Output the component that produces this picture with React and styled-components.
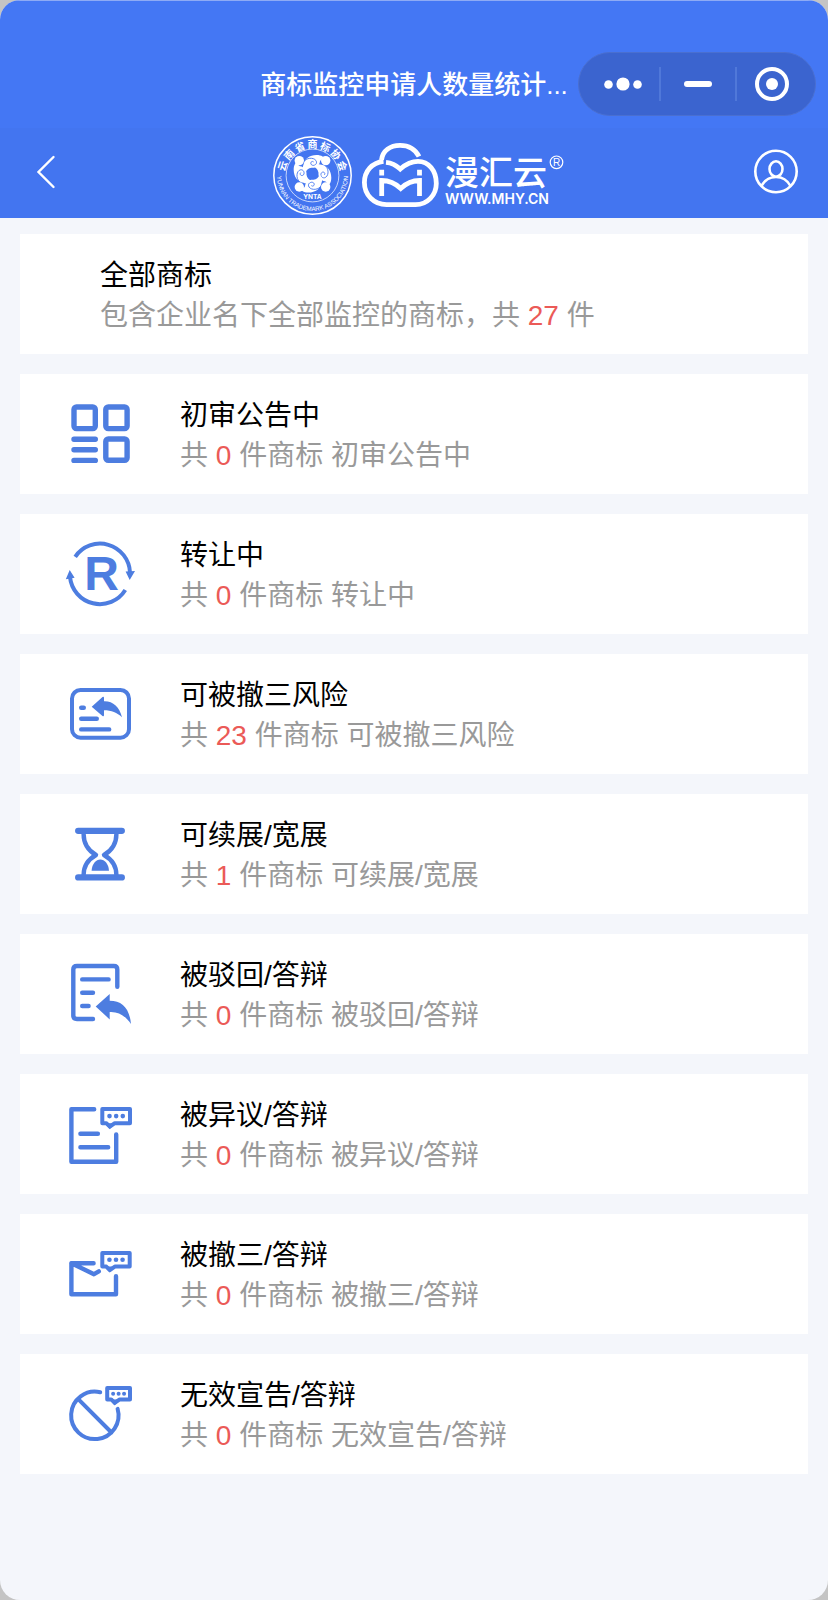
import React from 'react';
import styled, { createGlobalStyle } from 'styled-components';

const GlobalStyle = createGlobalStyle`
  * { box-sizing: border-box; }
  body {
    margin: 0;
    background: #c4c4c4;
    font-family: "Liberation Sans", "Noto Sans CJK SC", sans-serif;
  }
  button { border: 0; padding: 0; background: none; color: inherit; font: inherit; cursor: pointer; }
`;

const Window = styled.div`
  min-height: 100vh;
  background: #f4f6fb;
  border-radius: 20px;
  overflow: hidden;
`;

const TitleBar = styled.div`
  display: grid;
  grid-template-columns: 1fr auto 1fr;
  align-items: center;
  height: 128px;
  padding: 40px 12px 0;
  background: #4477f4;
  box-shadow: inset 0 1px 0 #8eabf5;
  color: #fff;
`;

const PageTitle = styled.h1`
  grid-column: 2;
  margin: 0;
  padding-top: 2px;
  font-size: 26px;
  line-height: 40px;
  font-weight: 500;
  white-space: nowrap;
`;

const Capsule = styled.div`
  justify-self: end;
  display: flex;
  align-items: center;
  width: 238px;
  height: 64px;
  padding: 0 8px;
  border: 1px solid #4a6fd0;
  border-radius: 32px;
  background: #3b64cf;
`;

const CapsuleButton = styled.button`
  flex: 1 1 ${(p) => p.$basis};
  display: flex;
  align-items: center;
  justify-content: center;
  height: 34px;
  & + & { border-left: 2px solid #5078d9; }
`;

const BrandBar = styled.div`
  display: grid;
  grid-template-columns: 1fr auto 1fr;
  align-items: center;
  height: 90px;
  padding: 0 28px;
  background: #4375f0;
  color: #fff;
`;

const IconButton = styled.button`
  justify-self: ${(p) => p.$side};
  display: flex;
`;

const CardList = styled.ul`
  display: flex;
  flex-direction: column;
  gap: 20px;
  margin: 0;
  padding: 16px 20px;
  list-style: none;
`;

const Card = styled.li`
  display: flex;
  align-items: center;
  gap: 40px;
  min-height: 120px;
  padding: 18px 40px 18px ${(p) => (p.$plain ? '80px' : '40px')};
  background: #fff;
`;

const CardIcon = styled.svg`
  flex: none;
  width: 80px;
  height: 80px;
  fill: none;
  stroke: #4d7de0;
  stroke-width: 4.4;
  stroke-linecap: round;
  stroke-linejoin: round;
  .solid { fill: #4d7de0; stroke: none; }
`;

const CardText = styled.div`
  padding-top: 4px;
  font-size: 28px;
  line-height: 40px;
`;

const CardTitle = styled.h2`
  margin: 0;
  font: inherit;
  color: #000;
`;

const CardDetail = styled.p`
  margin: 0;
  color: #999;
`;

const Count = styled.span`
  color: #eb5a57;
`;

function Bubble({ x, y, w, h, r = 2.3 }) {
  const tail = x + 7.5;
  return (
    <>
      <path strokeWidth="4" d={`M${x} ${y}h${w}v${h}h${12.5 - w}l-5 3.5l-3.5 -3.5H${x}z`} />
      <path className="solid" d={`M${tail - 5} ${y + h}h10l-5 6z`} />
      {[0.26, 0.5, 0.74].map((t) => (
        <circle key={t} className="solid" cx={x + w * t} cy={y + h / 2} r={r} />
      ))}
    </>
  );
}

const icons = {
  grid: (
    <g strokeWidth="5.4">
      <rect x="14" y="13" width="21.3" height="21.6" rx="2.5" />
      <rect x="45.8" y="13" width="21.3" height="21.6" rx="2.5" />
      <rect x="45.8" y="45" width="21.3" height="21.3" rx="2.5" />
      <path d="M14 45.2h21.3M14 55.8h21.3M14 66.4h21.3" />
    </g>
  ),
  transfer: (
    <>
      <g strokeWidth="4" strokeLinecap="butt">
        <path d="M15.2 22.8A30 30 0 0 1 70 38.5" />
        <path d="M65.3 56A30 30 0 0 1 10 43" />
      </g>
      <path className="solid" d="M65.6 37.5L75 37L69.7 46zM5.8 45.2L14.6 43.8L9.7 36z" />
      <text className="solid" x="41.5" y="56" textAnchor="middle" fontFamily="Liberation Sans, sans-serif" fontWeight="700" fontSize="48">R</text>
    </>
  ),
  risk: (
    <>
      <rect x="12" y="16" width="57" height="47.7" rx="8.5" strokeWidth="4" />
      <path d="M21.2 33.7h2.6M21.2 44.7h15.6M21.2 55.4h28" />
      <path className="solid" d="M31.7 32.7L42.5 23Q44 22 44 24V27.3C53 27 59.5 33 62 43.3C57 38.5 51.5 36.3 44 36.3V41Q44 43 42.5 42z" />
    </>
  ),
  hourglass: (
    <>
      <path strokeWidth="6.3" d="M18.2 16.8h43.6M18.2 63.4h43.6" />
      <path d="M23.6 20C23.6 31 29 37 36 41C28 45.5 23.6 52 23.6 61M56.4 20C56.4 31 51 37 44 41C52 45.5 56.4 52 56.4 61" />
      <path className="solid" d="M31.6 56.8C32 50 36 45.6 40.3 45.6S48.6 50 49 56.8z" />
    </>
  ),
  rejected: (
    <>
      <path d="M57.3 32.8V15.5Q57.3 12 53.8 12H17Q13.3 12 13.3 15.5V61.5Q13.3 65 17 65H33" />
      <path d="M22.2 25.4h26.4M22.2 38.7h10.8M22.2 52h6.4" />
      <path className="solid" d="M35.7 52.6L49.7 40V46.7C62 46.7 69.5 54 71 70C65 61.5 58.5 57.5 49.7 58V65.4z" />
    </>
  ),
  objection: (
    <>
      <path d="M34.2 15.2H11.4V67.8H56.2V40.4M20.4 39.7h17.5M20.4 53.3h27.8" />
      <Bubble x={42.3} y={15} w={27.7} h={14.2} />
    </>
  ),
  revoke: (
    <>
      <path d="M33.6 29.2H11.4V60.2H56V42.3M11.4 29.2L34 40.2L38.8 37.4" />
      <Bubble x={42.3} y={19} w={27.4} h={13.6} />
    </>
  ),
  invalid: (
    <>
      <path strokeWidth="4" d="M40.2 18.3A23.7 23.7 0 1 0 57.6 34.8M18 24.8L51.5 58.5" />
      <Bubble x={47.2} y={14} w={22.8} h={11.4} r={2} />
    </>
  ),
};

const categories = [
  { icon: 'grid', name: '初审公告中', count: 0 },
  { icon: 'transfer', name: '转让中', count: 0 },
  { icon: 'risk', name: '可被撤三风险', count: 23 },
  { icon: 'hourglass', name: '可续展/宽展', count: 1 },
  { icon: 'rejected', name: '被驳回/答辩', count: 0 },
  { icon: 'objection', name: '被异议/答辩', count: 0 },
  { icon: 'revoke', name: '被撤三/答辩', count: 0 },
  { icon: 'invalid', name: '无效宣告/答辩', count: 0 },
];

function BrandLogo() {
  return (
    <svg width="300" height="84" viewBox="0 -2 300 84" fill="none" stroke="#fff" fontFamily="'Liberation Sans','Noto Sans CJK SC',sans-serif">
      <defs>
        <path id="ring" d="M13 42.5A35.5 35.5 0 0 0 84 42.5" />
      </defs>
      <circle cx="48.5" cy="42.5" r="38.7" strokeWidth="1.5" />
      <circle cx="48.5" cy="42.5" r="26.4" strokeWidth="0.7" />
      <g fill="#fff" stroke="none" fontSize="10" fontWeight="700" textAnchor="middle">
        {[...'云南省商标协会'].map((ch, i) => (
          <text key={ch} x="48.5" y="14.8" transform={`rotate(${(i - 3) * 24} 48.5 42.5)`}>{ch}</text>
        ))}
      </g>
      <g fill="#fff" stroke="none">
        <text fontSize="6.2">
          <textPath href="#ring" startOffset="50%" textAnchor="middle">YUNNAN TRADEMARK ASSOCIATION</textPath>
        </text>
        <text x="48.5" y="66" fontFamily="Inter, sans-serif" fontSize="6.5" fontWeight="700" textAnchor="middle">YNTA</text>
      </g>
      {[0, 90, 180, 270].map((a) => (
        <g key={a} transform={`translate(48.5 40.8) rotate(${a})`}>
          <circle cx="-13.2" cy="-13.2" r="4.7" fill="#fff" stroke="none" />
          <path fill="#fff" stroke="none" d="M-9 -9C-8 -15 -3 -18.8 4 -18.8C9 -18.8 12 -16.500 13.500 -14C10 -15 8.500 -14.500 7.500 -12.500C7 -8 3 -5.500 -1 -6C-4 -5.500 -6 -4 -7 -1C-10 -3 -10 -7 -9 -9z" />
          <path stroke="#4375f0" strokeWidth="0.9" d="M-8 -13C-4 -17 3 -16 4 -12C4.500 -9 1 -7.500 -1 -9C-3 -11 -0.500 -13.500 1.200 -11.700" />
        </g>
      ))}
      <g strokeWidth="4.8">
        <path d="M117.5 27C118.500 17.500 126.500 12.300 136 12.300C145 12.300 151.500 16.500 155 23.500" />
        <path d="M119.500 28.300C108 29.500 100.400 38 100.400 49.500C100.400 62 110 71.600 122.500 71.600H151.500C163.500 71.600 172.300 62 172.300 50.500C172.300 37.500 164.500 28.400 154 28.400C147 28.400 141.500 31.500 136.300 36C132 32 127.500 29.800 122 29.300" />
        <path d="M117.700 63V47.500C125 47.500 131.500 50.500 136.700 55.500C142 50.500 148.500 47.500 155.500 47.500V63M117.700 36.700V42.500M155.500 36.700V42.500" />
      </g>
      <g fill="#fff" stroke="none">
        <text x="181" y="52" fontSize="34" fontWeight="500">漫汇云</text>
        <text x="181" y="71" fontFamily="Inter, sans-serif" fontSize="14" fontWeight="600">WWW.MHY.CN</text>
        <text x="292.500" y="33" fontSize="10" textAnchor="middle">R</text>
      </g>
      <circle cx="292.500" cy="29.300" r="6.300" strokeWidth="1.200" />
    </svg>
  );
}

export default function App() {
  return (
    <>
      <GlobalStyle />
      <Window>
        <header>
          <TitleBar>
            <PageTitle>商标监控申请人数量统计...</PageTitle>
            <Capsule>
              <CapsuleButton $basis="72px" aria-label="更多">
                <svg width="38" height="14" viewBox="0 0 38 14" fill="#fff">
                  <circle cx="4.500" cy="7.500" r="4.300" />
                  <circle cx="19" cy="7" r="6.600" />
                  <circle cx="33.500" cy="7.500" r="4.300" />
                </svg>
              </CapsuleButton>
              <CapsuleButton $basis="76px" aria-label="最小化">
                <svg width="28" height="6" viewBox="0 0 28 6"><rect width="28" height="6" rx="3" fill="#fff" /></svg>
              </CapsuleButton>
              <CapsuleButton $basis="72px" aria-label="关闭">
                <svg width="34" height="34" viewBox="0 0 34 34">
                  <circle cx="17" cy="17" r="15" fill="none" stroke="#fff" strokeWidth="4" />
                  <circle cx="17" cy="17" r="6" fill="#fff" />
                </svg>
              </CapsuleButton>
            </Capsule>
          </TitleBar>
          <BrandBar>
            <IconButton $side="start" aria-label="返回">
              <svg width="36" height="36" viewBox="0 0 36 36" fill="none" stroke="#fff" strokeWidth="2.400" strokeLinecap="round">
                <path d="M25.500 2L10.500 17L25.500 32" />
              </svg>
            </IconButton>
            <BrandLogo />
            <IconButton $side="end" aria-label="我的">
              <svg width="48" height="48" viewBox="0 0 48 48" fill="none" stroke="#fff" strokeWidth="2.600">
                <circle cx="24" cy="22.500" r="20.700" />
                <ellipse cx="24" cy="20" rx="6.500" ry="7.700" />
                <path d="M9.500 37C12.500 31.500 18 28 24 28S35.500 31.500 38.500 37" />
              </svg>
            </IconButton>
          </BrandBar>
        </header>
        <main>
          <CardList>
            <Card $plain>
              <CardText>
                <CardTitle>全部商标</CardTitle>
                <CardDetail>包含企业名下全部监控的商标，共 <Count>27</Count> 件</CardDetail>
              </CardText>
            </Card>
            {categories.map((c) => (
              <Card key={c.name}>
                <CardIcon viewBox="0 0 80 80" aria-hidden="true">{icons[c.icon]}</CardIcon>
                <CardText>
                  <CardTitle>{c.name}</CardTitle>
                  <CardDetail>共 <Count>{c.count}</Count> 件商标 {c.name}</CardDetail>
                </CardText>
              </Card>
            ))}
          </CardList>
        </main>
      </Window>
    </>
  );
}
